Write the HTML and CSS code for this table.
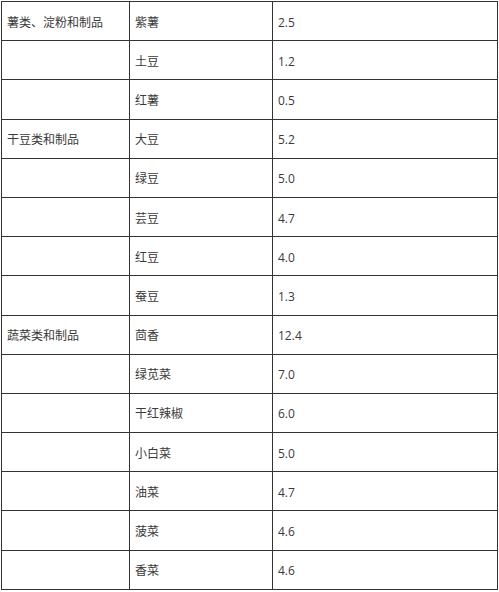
FILE: index.html
```html
<!DOCTYPE html>
<html lang="zh">
<head>
<meta charset="utf-8">
<link rel="stylesheet" href="styles.css">
</head>
<body>
<table class="data">
<colgroup><col class="c1"><col class="c2"><col class="c3"></colgroup>
<tbody>
<tr><td>薯类、淀粉和制品</td><td>紫薯</td><td>2.5</td></tr>
<tr><td></td><td>土豆</td><td>1.2</td></tr>
<tr><td></td><td>红薯</td><td>0.5</td></tr>
<tr><td>干豆类和制品</td><td>大豆</td><td>5.2</td></tr>
<tr><td></td><td>绿豆</td><td>5.0</td></tr>
<tr><td></td><td>芸豆</td><td>4.7</td></tr>
<tr><td></td><td>红豆</td><td>4.0</td></tr>
<tr><td></td><td>蚕豆</td><td>1.3</td></tr>
<tr><td>蔬菜类和制品</td><td>茴香</td><td>12.4</td></tr>
<tr><td></td><td>绿苋菜</td><td>7.0</td></tr>
<tr><td></td><td>干红辣椒</td><td>6.0</td></tr>
<tr><td></td><td>小白菜</td><td>5.0</td></tr>
<tr><td></td><td>油菜</td><td>4.7</td></tr>
<tr><td></td><td>菠菜</td><td>4.6</td></tr>
<tr><td></td><td>香菜</td><td>4.6</td></tr>
</tbody>
</table>
</body>
</html>
```
FILE: styles.css
```css
html, body {
  margin: 0;
  padding: 0;
  background: #fff;
}
body {
  padding: 1px 0 0 1px;
  font-family: "Open Sans", "Noto Sans CJK SC", sans-serif;
  font-size: 12px;
  color: #3a3a3a;
}
.data {
  border-collapse: separate;
  border-spacing: 0;
  table-layout: fixed;
  width: 497px;
  border-left: 1px solid #333;
  border-top: 1px solid #333;
}
.c1 { width: 128px; }
.c2 { width: 143px; }
.c3 { width: 225px; }
.data td {
  box-sizing: border-box;
  height: 39.2px;
  padding: 3px 0 0 5px;
  border-right: 1px solid #333;
  border-bottom: 1px solid #333;
  vertical-align: middle;
  white-space: nowrap;
  line-height: 16px;
}
```
